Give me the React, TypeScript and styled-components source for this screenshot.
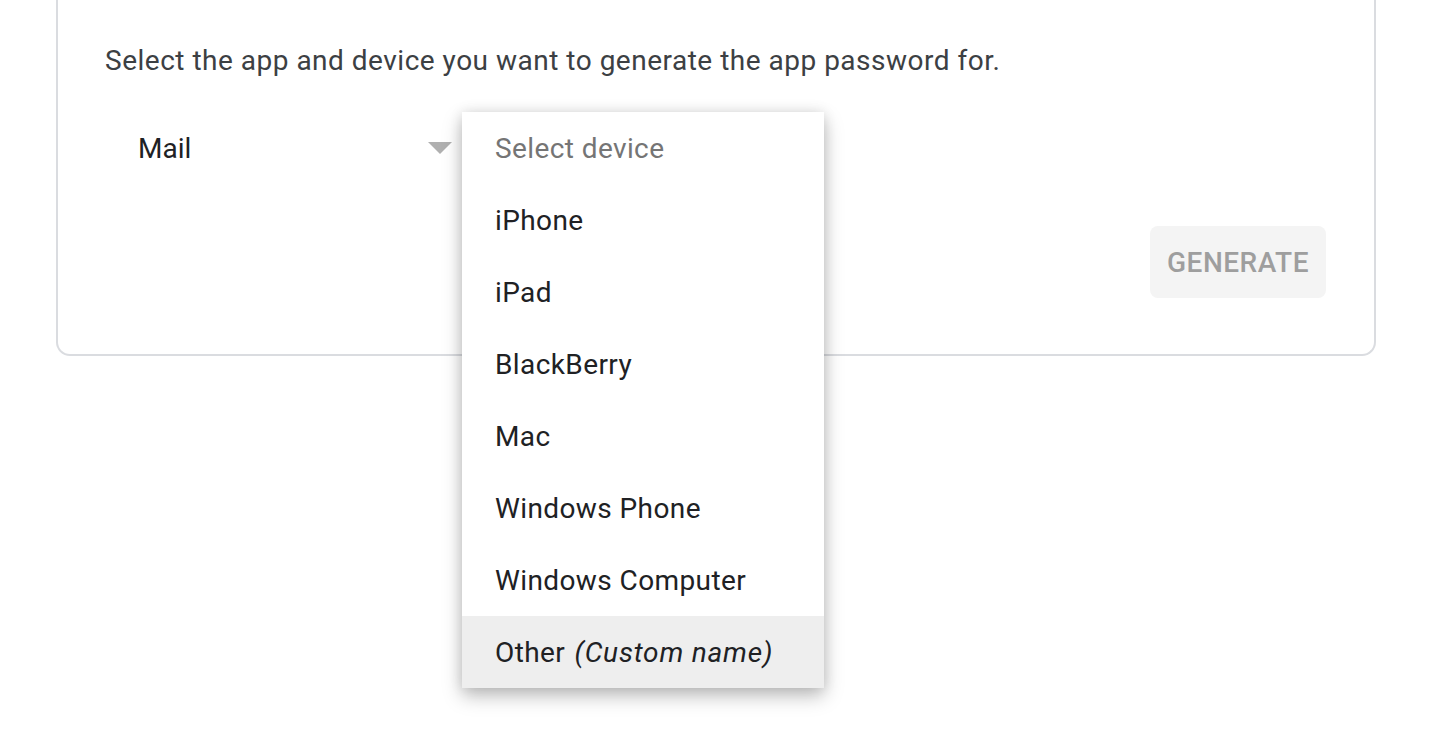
import React from "react";
import styled, { createGlobalStyle } from "styled-components";

const Global = createGlobalStyle`
  html, body { margin: 0; padding: 0; background: #ffffff; }
  body { font-family: Roboto, "Noto Sans", Arial, sans-serif; }
  * { box-sizing: border-box; }
`;

const Page = styled.div`
  width: 1432px;
  height: 730px;
  overflow: hidden;
  padding: 0 56px;
`;

const Card = styled.section`
  width: 1320px;
  border: 2px solid #dadce0;
  border-top: none;
  border-radius: 0 0 14px 14px;
  padding: 43px 48px 56px 47px;
  display: flex;
  flex-direction: column;
`;

const Intro = styled.p`
  margin: 0;
  font-size: 28px;
  line-height: 36px;
  color: #3c4043;
  letter-spacing: 0.5px;
`;

const SelectRow = styled.div`
  margin-top: 33px;
  display: flex;
  align-items: stretch;
`;

const AppSelect = styled.div`
  width: 357px;
  height: 72px;
  display: flex;
  align-items: center;
  justify-content: space-between;
  padding: 0 10px 0 33px;
  font-size: 28px;
  color: #202124;
`;

const DeviceSelect = styled.div`
  position: relative;
  width: 362px;
  height: 72px;
`;

const Menu = styled.ul`
  position: absolute;
  top: 0;
  left: 0;
  width: 362px;
  margin: 0;
  padding: 0;
  list-style: none;
  background: #ffffff;
  box-shadow: 0 8px 18px rgba(0, 0, 0, 0.26), 0 0 12px rgba(0, 0, 0, 0.1);
  z-index: 2;
`;

const Item = styled.li<{ $muted?: boolean; $active?: boolean }>`
  height: 72px;
  display: flex;
  align-items: center;
  padding-left: 33px;
  font-size: 28px;
  letter-spacing: 0.4px;
  color: ${(p) => (p.$muted ? "#757575" : "#202124")};
  background: ${(p) => (p.$active ? "#eeeeee" : "transparent")};
  white-space: pre;
`;

const Hint = styled.em`
  font-style: italic;
  margin-left: 2px;
  letter-spacing: 0.8px;
`;

const Footer = styled.div`
  margin-top: 42px;
  display: flex;
  justify-content: flex-end;
`;

const GenerateButton = styled.button`
  width: 176px;
  height: 72px;
  border: none;
  border-radius: 8px;
  background: #f4f4f4;
  color: #9e9e9e;
  font-family: Roboto, "Noto Sans", Arial, sans-serif;
  font-size: 28px;
  font-weight: 500;
  letter-spacing: 0.5px;
  padding: 0;
`;

const Caret = () => (
  <svg width="24" height="12" viewBox="0 0 24 12" aria-hidden="true">
    <path d="M0 0 H24 L12 12 Z" fill="#b0b0b0" />
  </svg>
);

const devices = [
  "iPhone",
  "iPad",
  "BlackBerry",
  "Mac",
  "Windows Phone",
  "Windows Computer",
];

export default function App() {
  return (
    <>
      <Global />
      <Page>
        <Card>
          <Intro>Select the app and device you want to generate the app password for.</Intro>
          <SelectRow>
            <AppSelect>
              <span>Mail</span>
              <Caret />
            </AppSelect>
            <DeviceSelect>
              <Menu>
                <Item $muted>Select device</Item>
                {devices.map((d) => (
                  <Item key={d}>{d}</Item>
                ))}
                <Item $active>
                  Other <Hint>(Custom name)</Hint>
                </Item>
              </Menu>
            </DeviceSelect>
          </SelectRow>
          <Footer>
            <GenerateButton disabled>GENERATE</GenerateButton>
          </Footer>
        </Card>
      </Page>
    </>
  );
}
